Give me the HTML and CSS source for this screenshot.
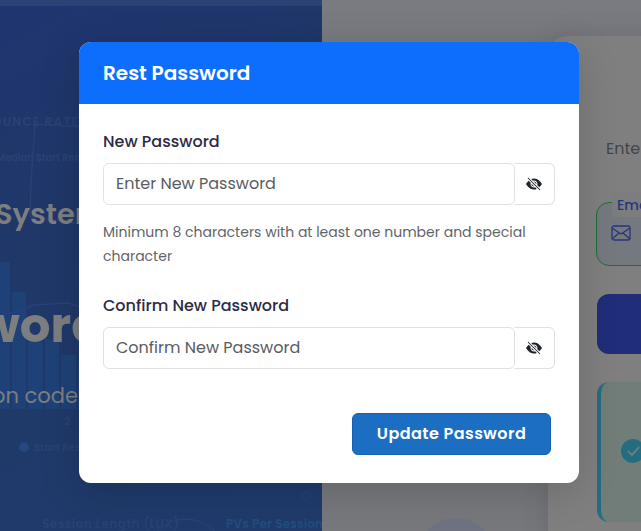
FILE: index.html
```html
<!DOCTYPE html>
<html lang="en">
<head>
<meta charset="utf-8">
<title>Reset Password</title>
<link rel="stylesheet" href="styles.css">
</head>
<body>
<div class="page">
  <section class="hero">
    <svg class="hero-art" width="322" height="531" viewBox="0 0 322 531">
      <rect width="322" height="6" fill="#2c4274"/>
      <g fill="#1e4277">
        <rect x="-5" y="262" width="15" height="147"/>
        <rect x="12" y="292" width="14" height="117"/>
        <rect x="28" y="342" width="15" height="67"/>
        <rect x="45" y="339" width="14" height="70"/>
        <rect x="61" y="355" width="15" height="54"/>
        <rect x="78" y="362" width="14" height="47"/>
      </g>
      <g fill="none" stroke="#2d447b" stroke-width="1.5">
        <path d="M80 127 35 124 31 182 30 216 80 224" opacity=".7"/>
        <path d="M0 315 22 311 33 305 68 303 80 307" stroke="#293f82"/>
        <path d="M157 531Q186 507 215 531" opacity=".7"/>
        <circle cx="306" cy="496" r="4" stroke="#24497a" opacity=".6"/>
      </g>
      <circle cx="24" cy="447" r="5" fill="#26477f"/>
      <g class="art-text">
        <text x="-8" y="126" font-size="12" textLength="86">OUNCE RATE</text>
        <text x="-4" y="161" font-size="10" textLength="85">Median Start Ren</text>
        <text x="64" y="425" font-size="11">2</text>
        <text x="34" y="451" font-size="10" textLength="48">Start Ren</text>
        <text x="42" y="528" font-size="12" textLength="137">Session Length (LUX)</text>
        <text x="226" y="528" font-size="12" textLength="97" class="teal">PVs Per Session</text>
      </g>
      <g class="hero-text">
        <text x="-5" y="224" font-size="28" font-weight="600" textLength="110" lengthAdjust="spacingAndGlyphs">System</text>
        <text x="-22" y="342" font-size="48" font-weight="700" textLength="126" lengthAdjust="spacingAndGlyphs">word</text>
        <text x="-8" y="403" font-size="22" textLength="86" lengthAdjust="spacingAndGlyphs">on code</text>
      </g>
    </svg>
  </section>
  <main class="side">
    <div class="blob"></div>
    <div class="card">
      <p class="lead">Enter</p>
      <div class="field">
        <span class="field-label">Email</span>
        <svg width="20" height="16" viewBox="0 0 20 16" fill="none" stroke="#27357d" stroke-width="1.3"><rect x="1" y="1" width="18" height="14" rx="2"/><path d="m1 3 9 6 9-6M1 14l7-6M19 14l-7-6"/></svg>
      </div>
      <div class="submit"></div>
      <div class="notice">
        <svg width="24" height="24" viewBox="0 0 24 24"><circle cx="12" cy="12" r="12" fill="#246d80"/><path d="m7 12 4 4 7-8" fill="none" stroke="#75827e" stroke-width="1.7"/></svg>
      </div>
    </div>
  </main>
</div>
<div class="modal">
  <header class="modal-header"><h1>Rest Password</h1></header>
  <div class="modal-body">
    <label class="label">New Password</label>
    <div class="group">
      <div class="input">Enter New Password</div>
      <div class="eye"><svg width="16" height="16" viewBox="0 0 16 16"><use href="#eye-slash"/></svg></div>
    </div>
    <p class="hint">Minimum 8 characters with at least one number and special<br>character</p>
    <label class="label">Confirm New Password</label>
    <div class="group">
      <div class="input">Confirm New Password</div>
      <div class="eye"><svg width="16" height="16" viewBox="0 0 16 16"><use href="#eye-slash"/></svg></div>
    </div>
    <div class="actions"><button class="btn">Update Password</button></div>
  </div>
</div>
<svg class="defs" width="0" height="0">
  <symbol id="eye-slash" viewBox="0 0 16 16">
    <path fill="#212529" d="m10.79 12.912-1.614-1.615a3.5 3.5 0 0 1-4.474-4.474l-2.06-2.06C.938 6.278 0 8 0 8s3 5.5 8 5.5a7 7 0 0 0 2.79-.588M5.21 3.088A7 7 0 0 1 8 2.500c5 0 8 5.500 8 5.500s-.939 1.721-2.641 3.238l-2.062-2.062a3.500 3.500 0 0 0-4.474-4.474z"/>
    <path fill="#212529" d="M5.525 7.646a2.500 2.500 0 0 0 2.829 2.829zm4.950.708-2.829-2.830a2.500 2.500 0 0 1 2.829 2.829zm3.171 6-12-12 .708-.708 12 12z"/>
  </symbol>
</svg>
</body>
</html>
```

FILE: styles.css
```css
* { box-sizing: border-box; }
body {
  margin: 0;
  width: 641px;
  height: 531px;
  overflow: hidden;
  position: relative;
  font-family: Poppins, Inter, sans-serif;
}
.page { display: flex; height: 531px; }
.hero {
  width: 322px;
  flex: none;
  background: linear-gradient(155deg, #1f3570 0%, #1f3868 40%, #203b6c 100%);
}
.hero-art { display: block; }
.art-text { fill: #284374; font-weight: 600; }
.art-text .teal { fill: #214e7c; }
.hero-text { fill: #7c7e80; }
.side {
  flex: 1;
  position: relative;
  overflow: hidden;
  padding: 36px 0 0 226px;
  background: linear-gradient(#7a7b80, #75767b 60%, #77787c);
}
.blob {
  position: absolute;
  left: 96px;
  top: 518px;
  width: 76px;
  height: 76px;
  border-radius: 50%;
  background: #6f7381;
}
.card {
  position: relative;
  width: 400px;
  height: 560px;
  padding: 99px 0 0 48px;
  border-radius: 20px;
  background: #807f7f;
  box-shadow: 0 0 24px rgba(50, 50, 60, .18);
}
.lead { margin: 0 0 39px 10px; font-size: 16px; line-height: 28px; color: #42474b; }
.field {
  position: relative;
  width: 330px;
  height: 64px;
  padding: 22px 0 0 14px;
  border: 1.5px solid #1e6e37;
  border-radius: 13px;
  background: #747980;
}
.field svg { display: block; }
.field-label {
  position: absolute;
  left: 15px;
  top: -10px;
  padding: 0 5px;
  background: #7c7d7e;
  color: #27357d;
  font-size: 14px;
  font-weight: 500;
  line-height: 24px;
}
.submit { width: 330px; height: 60px; margin: 28px 0 28px 1px; border-radius: 12px; background: #202d78; }
.notice {
  width: 330px;
  height: 140px;
  margin-left: 1px;
  padding: 57px 0 0 20px;
  border-left: 4px solid #246d80;
  border-radius: 12px;
  background: #707d79;
}
.modal {
  position: absolute;
  left: 79px;
  top: 42px;
  width: 500px;
  height: 441px;
  border-radius: 12px;
  overflow: hidden;
  background: #fff;
  box-shadow: 0 8px 40px rgba(0, 0, 0, .16);
}
.modal-header { height: 62px; padding: 0 24px; background: #0d6efd; color: #fff; }
.modal-header h1 { margin: 0; font-size: 20px; font-weight: 600; line-height: 62px; }
.modal-body { padding: 24px; }
.label { display: block; height: 35px; font-size: 16px; font-weight: 500; line-height: 27px; color: #2b2b45; }
.group { display: flex; width: 452px; height: 42px; }
.input {
  width: 412px;
  padding: 0 12px;
  border: 1px solid #dee2e6;
  border-radius: 6px;
  font-size: 16px;
  line-height: 40px;
  color: #595c5f;
}
.eye {
  display: flex;
  width: 41px;
  margin-left: -1px;
  align-items: center;
  justify-content: center;
  border: 1px solid #dee2e6;
  border-left: 0;
  border-radius: 0 6px 6px 0;
  color: #212529;
}
.hint { margin: 15px 0 24px; font-size: 14px; line-height: 24px; color: #5f6469; white-space: nowrap; }
.actions { display: flex; justify-content: flex-end; padding: 44px 4px 0 0; }
.btn {
  width: 199px;
  height: 42px;
  padding: 0;
  border: 1px solid #1761b0;
  border-radius: 6px;
  background: #1b6ec2;
  color: #fff;
  font: 600 16px/40px Poppins, Inter, sans-serif;
  letter-spacing: .45px;
}
.defs { position: absolute; }
```
